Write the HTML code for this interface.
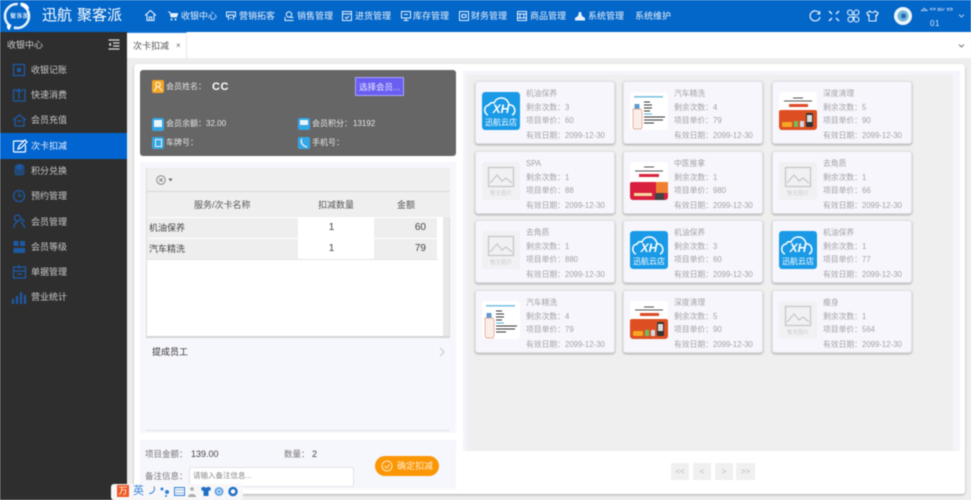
<!DOCTYPE html>
<html lang="zh">
<head>
<meta charset="utf-8">
<title>次卡扣减</title>
<style>
html,body{margin:0;padding:0;width:971px;height:500px;overflow:hidden;background:#eee}
#r{position:relative;width:971px;height:500px;overflow:hidden;font-family:"Liberation Sans","Noto Sans CJK SC",sans-serif;filter:blur(.5px);background:#eee}
#r div,#r span.a,#r svg.a{position:absolute}
.t{white-space:nowrap;line-height:12px}
.n{color:#e8f1fb;font-size:9px;top:10px}
.s{color:#c9c9c9;font-size:9px;left:31px}
.c{width:138px;height:61px;background:#f6f6fc;border:1px solid #e2e2e8;border-radius:3px;box-shadow:0 1px 2px #a5a5a5}
.c .t{left:50px;color:#a2a2a6;font-size:7.800px}
.im{left:6px;top:10px;width:38px;height:38px;overflow:hidden;border-radius:3px}
.m{color:#e6e6e6;font-size:8px}
.cell{font-size:9px;color:#444;line-height:20px;height:20px;white-space:nowrap}
.p{top:463px;width:18px;height:17px;background:#f0f0f0;color:#bbb;font-size:8px;line-height:17px;text-align:center}
</style>
</head>
<body>
<div id="r">
<svg width="0" height="0" style="position:absolute">
<symbol id="xh" viewBox="0 0 38 38"><rect width="38" height="38" rx="3" fill="#1a9ae6"/><path d="M6 23c-4-1-5-9 1-10 1-2 3-3 5-2 2-6 11-7 14-1 1 1 1 2 1 3 6-1 8 8 3 10" fill="none" stroke="#fff" stroke-width="1.500"/></symbol>
<symbol id="ph" viewBox="0 0 38 38"><rect width="38" height="38" fill="#f1f1f4"/><rect x="6.500" y="5.500" width="25" height="19" fill="none" stroke="#c6c6c6" stroke-width="1.300"/><path d="M8 21l7-8 5 6 4-3 6 5" fill="none" stroke="#c6c6c6" stroke-width="1.200"/></symbol>
<symbol id="bt" viewBox="0 0 38 38"><rect width="38" height="38" fill="#fff"/><rect x="4" y="4" width="29" height="1.600" fill="#7cc4e2"/><rect x="4.500" y="12" width="5" height="5" fill="#5b9bd0"/><path d="M3 17h8l1 3v15l-1 2H4l-1-2z" fill="#fbeee8" stroke="#dd9c88" stroke-width=".7"/><path d="M14 10h6M14 13h8M14 16h8M14 19h6M14 22h8M14 25h21M14 28h19M14 31h10" stroke="#333" stroke-width="1.100"/><path d="M14 22h8" stroke="#4ab0d8" stroke-width="1.100"/></symbol>
<symbol id="or" viewBox="0 0 38 38"><rect width="38" height="38" rx="2" fill="#fff"/><path d="M14 6h10M5 9h28" stroke="#555" stroke-width="1"/><rect x="10" y="12" width="19" height="3" fill="#dc4a2a"/><rect y="18" width="38" height="20" rx="2" fill="#dd4f22"/><rect x="3" y="30" width="10" height="5" rx="1" fill="#f5a623"/><rect x="15" y="29" width="4" height="6" fill="#6cbf5a"/><rect x="21" y="29" width="4" height="6" fill="#cde"/><rect x="27" y="21" width="7" height="14" rx="1" fill="#333"/><rect x="28" y="23" width="5" height="7" fill="#ddd"/></symbol>
<symbol id="rd" viewBox="0 0 38 38"><rect width="38" height="38" rx="2" fill="#fff"/><path d="M14 5h10M5 9h28" stroke="#555" stroke-width="1"/><rect x="9" y="12" width="20" height="3" fill="#d8243c"/><rect y="20" width="38" height="18" rx="2" fill="#d81f3e"/><rect x="26" y="20" width="12" height="11" fill="#f08030"/><rect x="4" y="31" width="18" height="3" fill="#f6d9a0"/><rect x="25" y="31" width="9" height="7" fill="#444"/></symbol>
</svg>

<!-- Top bar -->
<div style="left:0;top:0;width:971px;height:32px;background:#0366c9"></div>
<svg class="a" style="left:3px;top:1px" width="29" height="30" viewBox="0 0 29 30"><circle cx="14" cy="15" r="12" fill="none" stroke="#e8f2fb" stroke-width="2.600" stroke-dasharray="22 3 32 3"/><path d="M17 2c4-1 9 2 9 6-4 0-7-2-9-6zM5 23c-2 2-1 5 1 6 2-1 2-4-1-6z" fill="#fff"/></svg>
<div class="t" style="left:10px;top:10px;font-size:6px;color:#fff;letter-spacing:.4px;font-family:'Noto Serif CJK SC',serif;font-weight:700">聚客派</div>
<div class="t" style="left:42px;top:7px;font-size:15px;line-height:18px;color:#fff">迅航</div>
<div class="t" style="left:77px;top:7px;font-size:15px;line-height:18px;color:#fff">聚客派</div>

<svg class="a" style="left:144px;top:9px" width="13" height="13" viewBox="0 0 13 13" fill="none" stroke="#e8f1fb" stroke-width="1.100"><path d="M1 6.500L6.500 1.500 12 6.500M3 5.500V11.500H10V5.500M5.300 11.500V8H7.700V11.500"/></svg>
<svg class="a" style="left:168px;top:11px" width="10" height="10" viewBox="0 0 10 10"><path d="M0 1h2l1 5h5.500L10 2.500H2.500" fill="#e8f1fb" stroke="#e8f1fb" stroke-width=".8"/><circle cx="3.500" cy="8.500" r="1" fill="#e8f1fb"/><circle cx="7.500" cy="8.500" r="1" fill="#e8f1fb"/></svg>
<div class="t n" style="left:181px">收银中心</div>
<svg class="a" style="left:226px;top:11px" width="10" height="10" viewBox="0 0 10 10" fill="none" stroke="#e8f1fb"><path d="M.5 1h9v4.500h-2V4h-5v1.500h-2zM2.500 4v5M7.500 4v5M4 7h2"/></svg>
<div class="t n" style="left:239px">营销拓客</div>
<svg class="a" style="left:284px;top:11px" width="10" height="10" viewBox="0 0 10 10" fill="none" stroke="#e8f1fb"><circle cx="5" cy="3.500" r="2.700"/><path d="M1 6v3.500h8.500M6.500 6.500h3"/></svg>
<div class="t n" style="left:297px">销售管理</div>
<svg class="a" style="left:342px;top:11px" width="10" height="10" viewBox="0 0 10 10" fill="none" stroke="#e8f1fb"><rect x=".5" y=".5" width="9" height="9"/><path d="M.5 3h9M3 6l1.500 1.500L7 5"/></svg>
<div class="t n" style="left:355px">进货管理</div>
<svg class="a" style="left:401px;top:11px" width="10" height="10" viewBox="0 0 10 10" fill="none" stroke="#e8f1fb"><rect x=".5" y=".5" width="9" height="6.500"/><path d="M5 7v2.500M2.500 9.500h5M3 3.500h4"/></svg>
<div class="t n" style="left:413px">库存管理</div>
<svg class="a" style="left:459px;top:11px" width="10" height="10" viewBox="0 0 10 10" fill="none" stroke="#e8f1fb"><rect x=".5" y=".5" width="9" height="9"/><rect x="3" y="3.500" width="4" height="3"/></svg>
<div class="t n" style="left:471px">财务管理</div>
<svg class="a" style="left:517px;top:11px" width="10" height="10" viewBox="0 0 10 10" fill="none" stroke="#e8f1fb"><rect x=".5" y=".5" width="9" height="9"/><path d="M.5 3h9M.5 7h9M3 3v4M7 3v4"/></svg>
<div class="t n" style="left:530px">商品管理</div>
<svg class="a" style="left:575px;top:11px" width="10" height="10" viewBox="0 0 10 10" fill="#e8f1fb"><path d="M4 1h2l1 4 3 2v2.500H0V7l3-2z"/></svg>
<div class="t n" style="left:588px">系统管理</div>
<div class="t n" style="left:635px">系统维护</div>

<svg class="a" style="left:809px;top:10px" width="12" height="12" viewBox="0 0 12 12" fill="none" stroke="#e8f1fb" stroke-width="1.200"><path d="M10.500 3.500A5 5 0 1 0 11 7"/><path d="M10.800 1v3H8" stroke-width="1"/></svg>
<svg class="a" style="left:828px;top:10px" width="12" height="12" viewBox="0 0 12 12" fill="none" stroke="#e8f1fb" stroke-width="1.400"><path d="M1 1l3 3M11 1L8 4M1 11l3-3M11 11L8 8"/></svg>
<svg class="a" style="left:846px;top:9px" width="14" height="14" viewBox="0 0 14 14" fill="none" stroke="#e8f1fb" stroke-width="1.100"><path d="M7 6H4a2.500 2.500 0 1 1 2.500-2.500V6zM8 6V3.500a2.500 2.500 0 1 1 2.500 2.500zM7 8v2.500A2.500 2.500 0 1 1 4 8zM8 8h2.500A2.500 2.500 0 1 1 8 10.500z"/></svg>
<svg class="a" style="left:866px;top:10px" width="13" height="12" viewBox="0 0 13 12" fill="none" stroke="#e8f1fb" stroke-width="1.100"><path d="M4 1L.8 3l1.200 2.500L3 5v6h7V5l1 .5L12.200 3 9 1c-.5 2-4.500 2-5 0z"/></svg>
<svg class="a" style="left:894px;top:7px" width="18" height="18" viewBox="0 0 18 18"><circle cx="9" cy="9" r="9" fill="#eef5fa"/><circle cx="9" cy="9" r="5.500" fill="#6fb4e0"/><circle cx="9.500" cy="9" r="2.500" fill="#2a6aa8"/></svg>
<div style="left:920px;top:7px;width:33px;height:4px;overflow:hidden"><div class="t" style="left:0;top:-1px;font-size:8.500px;color:#dfe9f5">会员账号</div></div>
<div class="t" style="left:930px;top:18px;font-size:8px;color:#dfe9f5;letter-spacing:.5px">01</div>
<svg class="a" style="left:958px;top:14px" width="7" height="4" viewBox="0 0 7 4" fill="none" stroke="#a9cdf0"><path d="M1 .5l2.500 2.500L6 .5"/></svg>

<!-- Sidebar -->
<div style="left:0;top:32px;width:127px;height:468px;background:#2e2e2e"></div>
<div class="t" style="left:7px;top:39px;font-size:9px;color:#cfcfcf">收银中心</div>
<svg class="a" style="left:108px;top:39px" width="12" height="11" viewBox="0 0 12 11" stroke="#ddd" fill="#ddd"><path d="M.5 1h11M5 4h6.500M5 7h6.500M.5 10h11" stroke-width="1.300"/><path d="M3 3.500v4L.5 5.500z" stroke="none"/></svg>
<div style="left:0;top:133px;width:127px;height:26px;background:#0065d0"></div>
<div class="t s" style="top:64px">收银记账</div>
<div class="t s" style="top:89px">快速消费</div>
<div class="t s" style="top:114px">会员充值</div>
<div class="t s" style="top:140px;color:#eef">次卡扣减</div>
<div class="t s" style="top:165px">积分兑换</div>
<div class="t s" style="top:190px">预约管理</div>
<div class="t s" style="top:216px">会员管理</div>
<div class="t s" style="top:241px">会员等级</div>
<div class="t s" style="top:266px">单据管理</div>
<div class="t s" style="top:291px">营业统计</div>
<svg class="a" style="left:0;top:58px" width="30" height="250" viewBox="0 0 30 250" fill="none" stroke="#1d5aa6" stroke-width="1.300">
<rect x="13.500" y="6.500" width="11" height="11"/><rect x="17" y="10" width="4" height="4" fill="#1d5aa6" stroke="none"/>
<path d="M17 32h-3.500v11H25V32h-3M19 41v-9M16.500 34l2.500-3 2.500 3"/>
<path d="M13 62l6.500-5 6.500 5M15 60v8h9v-8M17 63h5"/>
<path d="M24 83h-9.500a1 1 0 0 0-1 1v9a1 1 0 0 0 1 1h10a1 1 0 0 0 1-1v-6M18 91l1-3 6-6 2 2-6 6z" stroke="#fff" stroke-width="1.200"/>
<rect x="15" y="107" width="9" height="10" rx="2" fill="#1d5aa6" opacity=".6"/><circle cx="19.500" cy="109" r="3" fill="#1d5aa6" stroke="none"/>
<circle cx="19" cy="138" r="5.500"/><path d="M19 134.500V138h3"/>
<circle cx="17.500" cy="160" r="3"/><path d="M14 170c0-4 2-6 4-6M21 163l4 7M21 161a3 3 0 0 1 3 3"/>
<rect x="13.500" y="183" width="5" height="5" fill="#1d5aa6" stroke="none"/><rect x="20" y="183" width="5" height="5" fill="#1d5aa6" stroke="none"/><rect x="13.500" y="190" width="11.500" height="5" fill="#1d5aa6" stroke="none"/>
<rect x="13.500" y="209" width="12" height="11"/><path d="M13.500 213h12M19 207v4M17 216h5"/>
<path d="M13 246v-5M17 246v-8M21 246v-12M25 246v-9" stroke-width="2.200"/>
</svg>

<!-- Tab bar -->
<div style="left:127px;top:32px;width:844px;height:26px;background:#fff"></div>
<div style="left:127px;top:32px;width:60px;height:26px;background:#fff;border-top:1px solid #2d86d8;box-sizing:border-box;border-right:1px solid #e8e8e8"></div>
<div class="t" style="left:133px;top:40px;font-size:9px;color:#555">次卡扣减</div>
<div class="t" style="left:176px;top:40px;font-size:8px;color:#666">×</div>
<svg class="a" style="left:958px;top:44px" width="7" height="4" viewBox="0 0 7 4" fill="none" stroke="#777"><path d="M1 .5l2.500 2.500L6 .5"/></svg>

<!-- Card -->
<div style="left:134px;top:64px;width:831px;height:430px;background:#fff;border-radius:3px;box-shadow:0 1px 2px #aaa"></div>

<!-- Member panel -->
<div style="left:140px;top:70px;width:316px;height:86px;background:#666;border-radius:3px"></div>
<div style="left:152px;top:80px;width:12px;height:13px;background:#f5a623;border-radius:2px"></div>
<svg class="a" style="left:153px;top:81px" width="10" height="11" viewBox="0 0 10 11" fill="none" stroke="#fff"><circle cx="5" cy="3.500" r="2.300"/><path d="M1 10l3-4M9 10L6 6"/></svg>
<div class="t m" style="left:166px;top:81px">会员姓名：</div>
<div class="t" style="left:212px;top:81px;font-size:11px;font-weight:700;color:#fff;letter-spacing:.5px">CC</div>
<div class="t" style="left:355px;top:77px;width:49px;height:19px;line-height:18px;box-sizing:border-box;background:#6a5ef2;border:1px solid #a9a3fa;color:#e6e6ff;font-size:8.500px;text-align:center">选择会员...</div>
<div style="left:152px;top:118px;width:12px;height:13px;background:#35a6e4;border-radius:2px"></div>
<div style="left:154px;top:120px;width:8px;height:7px;background:#e9f5fc"></div>
<div class="t m" style="left:166px;top:118px">会员余额：<span style="font-size:8px">32.00</span></div>
<div style="left:298px;top:118px;width:12px;height:12px;background:#35a6e4;border-radius:2px"></div>
<div style="left:300px;top:120px;width:8px;height:5px;background:#e9f5fc"></div>
<div class="t m" style="left:312px;top:118px">会员积分：</div>
<div class="t m" style="left:353px;top:118px">13192</div>
<div style="left:152px;top:137px;width:12px;height:12px;background:#35a6e4;border-radius:2px"></div>
<div style="left:155px;top:139px;width:7px;height:8px;border:1px solid #e9f5fc;box-sizing:border-box"></div>
<div class="t m" style="left:166px;top:137px">车牌号：</div>
<div style="left:298px;top:137px;width:12px;height:12px;background:#35a6e4;border-radius:2px"></div>
<svg class="a" style="left:300px;top:138px" width="9" height="10" viewBox="0 0 9 10" fill="none" stroke="#fff" stroke-width="1.200"><path d="M2 1C0 3 2 8 7 9"/></svg>
<div class="t m" style="left:312px;top:137px">手机号：</div>

<!-- Left lower lavender -->
<div style="left:140px;top:162px;width:316px;height:271px;background:#f6f6fd"></div>
<div style="left:146px;top:430px;width:304px;height:1px;background:#dfdfe4"></div>

<!-- Table -->
<div style="left:146px;top:168px;width:304px;height:170px;background:#fff;border:1px solid #ddd;border-top:0;box-sizing:border-box;border-bottom:2px solid #d5d5d5"></div>
<div style="left:147px;top:168px;width:303px;height:24px;background:#efefef;border-bottom:1px solid #d9d9d9;box-sizing:border-box"></div>
<div style="left:147px;top:192px;width:303px;height:25px;background:#efefef"></div>
<div style="left:443px;top:217px;width:6px;height:119px;background:#e8e8e8"></div>
<svg class="a" style="left:156px;top:175px" width="20" height="10" viewBox="0 0 20 10" fill="none" stroke="#777" stroke-width=".8"><circle cx="5" cy="5" r="4.300"/><path d="M3.300 3.300l3.400 3.400M6.700 3.300L3.300 6.700"/><path d="M12.500 3.500h4l-2 3z" fill="#666" stroke="none"/></svg>
<div class="t" style="left:194px;top:199px;font-size:9px;color:#555">服务/次卡名称</div>
<div class="t" style="left:318px;top:199px;font-size:9px;color:#555">扣减数量</div>
<div class="t" style="left:397px;top:199px;font-size:9px;color:#555">金额</div>
<div class="cell" style="left:147px;top:218px;width:151px;background:#eee;padding-left:2px;box-sizing:border-box">机油保养</div>
<div class="cell" style="left:298px;top:218px;width:76px;background:#fff;text-align:center;font-size:10px;padding-right:9px;box-sizing:border-box">1</div>
<div class="cell" style="left:374px;top:218px;width:63px;background:#eee;text-align:right;padding-right:11px;box-sizing:border-box;font-size:10px">60</div>
<div class="cell" style="left:147px;top:239px;width:151px;background:#eee;padding-left:2px;box-sizing:border-box">汽车精洗</div>
<div class="cell" style="left:298px;top:239px;width:76px;background:#fff;text-align:center;font-size:10px;padding-right:9px;box-sizing:border-box">1</div>
<div class="cell" style="left:374px;top:239px;width:63px;background:#eee;text-align:right;padding-right:11px;box-sizing:border-box;font-size:10px">79</div>
<div style="left:147px;top:259px;width:291px;height:1px;background:#e4e4e4"></div>

<div class="t" style="left:152px;top:346px;font-size:9px;color:#333">提成员工</div>
<svg class="a" style="left:439px;top:347px" width="6" height="10" viewBox="0 0 6 10" fill="none" stroke="#ccc" stroke-width="1.200"><path d="M1 1l4 4-4 4"/></svg>

<!-- Bottom left -->
<div style="left:140px;top:440px;width:316px;height:49px;background:#f6f6fd"></div>
<div class="t" style="left:145px;top:448px;font-size:8.500px;color:#777">项目金额：</div>
<div class="t" style="left:191px;top:448px;font-size:9px;color:#444">139.00</div>
<div class="t" style="left:284px;top:448px;font-size:8.500px;color:#777">数量：</div>
<div class="t" style="left:312px;top:448px;font-size:9px;color:#444">2</div>
<div class="t" style="left:145px;top:470px;font-size:8.500px;color:#777">备注信息：</div>
<div style="left:189px;top:467px;width:165px;height:20px;background:#fff;border:1px solid #e4e4e4;box-sizing:border-box;border-radius:2px"></div>
<div class="t" style="left:193px;top:470px;font-size:7.500px;color:#888">请输入备注信息...</div>
<div style="left:375px;top:456px;width:64px;height:20px;background:#fb9606;border-radius:10px"></div>
<svg class="a" style="left:381px;top:460px" width="12" height="12" viewBox="0 0 12 12" fill="none" stroke="#ffe6b8"><circle cx="6" cy="6" r="5"/><path d="M3.500 6l2 2 3-3.500"/></svg>
<div class="t" style="left:397px;top:460px;font-size:9px;color:#ffeccc">确定扣减</div>

<!-- Right panel -->
<div style="left:463px;top:71px;width:497px;height:380px;background:#f4f4fb"></div>
<div style="left:467px;top:75px;width:486px;height:376px;background:#efefef"></div>

<!-- Row 1 -->
<div class="c" style="left:475px;top:81px"><svg class="a im" viewBox="0 0 38 38"><use href="#xh"/><text x="19" y="21" text-anchor="middle" font-size="12" font-weight="700" font-style="italic" fill="#fff" font-family="Liberation Sans">XH</text><text x="19" y="33" text-anchor="middle" font-size="8" fill="#fff" font-family="Noto Sans CJK SC">迅航云店</text></svg><div class="t" style="top:6px">机油保养</div><div class="t" style="top:20px">剩余次数：3</div><div class="t" style="top:33px">项目单价：60</div><div class="t" style="top:48px">有效日期：2099-12-30</div></div>
<div class="c" style="left:623px;top:81px"><svg class="a im" viewBox="0 0 38 38"><use href="#bt"/></svg><div class="t" style="top:6px">汽车精洗</div><div class="t" style="top:20px">剩余次数：4</div><div class="t" style="top:33px">项目单价：79</div><div class="t" style="top:48px">有效日期：2099-12-30</div></div>
<div class="c" style="left:772px;top:81px"><svg class="a im" viewBox="0 0 38 38"><use href="#or"/></svg><div class="t" style="top:6px">深度清理</div><div class="t" style="top:20px">剩余次数：5</div><div class="t" style="top:33px">项目单价：90</div><div class="t" style="top:48px">有效日期：2099-12-30</div></div>

<!-- Row 2 -->
<div class="c" style="left:475px;top:151px"><svg class="a im" viewBox="0 0 38 38"><use href="#ph"/><text x="19" y="33" text-anchor="middle" font-size="5.500" fill="#ccc" font-family="Noto Sans CJK SC">暂无图片</text></svg><div class="t" style="top:6px">SPA</div><div class="t" style="top:20px">剩余次数：1</div><div class="t" style="top:33px">项目单价：88</div><div class="t" style="top:48px">有效日期：2099-12-30</div></div>
<div class="c" style="left:623px;top:151px"><svg class="a im" viewBox="0 0 38 38"><use href="#rd"/></svg><div class="t" style="top:6px">中医推拿</div><div class="t" style="top:20px">剩余次数：1</div><div class="t" style="top:33px">项目单价：980</div><div class="t" style="top:48px">有效日期：2099-12-30</div></div>
<div class="c" style="left:772px;top:151px"><svg class="a im" viewBox="0 0 38 38"><use href="#ph"/><text x="19" y="33" text-anchor="middle" font-size="5.500" fill="#ccc" font-family="Noto Sans CJK SC">暂无图片</text></svg><div class="t" style="top:6px">去角质</div><div class="t" style="top:20px">剩余次数：1</div><div class="t" style="top:33px">项目单价：66</div><div class="t" style="top:48px">有效日期：2099-12-30</div></div>

<!-- Row 3 -->
<div class="c" style="left:475px;top:220px"><svg class="a im" viewBox="0 0 38 38"><use href="#ph"/><text x="19" y="33" text-anchor="middle" font-size="5.500" fill="#ccc" font-family="Noto Sans CJK SC">暂无图片</text></svg><div class="t" style="top:6px">去角质</div><div class="t" style="top:20px">剩余次数：1</div><div class="t" style="top:33px">项目单价：880</div><div class="t" style="top:48px">有效日期：2099-12-30</div></div>
<div class="c" style="left:623px;top:220px"><svg class="a im" viewBox="0 0 38 38"><use href="#xh"/><text x="19" y="21" text-anchor="middle" font-size="12" font-weight="700" font-style="italic" fill="#fff" font-family="Liberation Sans">XH</text><text x="19" y="33" text-anchor="middle" font-size="8" fill="#fff" font-family="Noto Sans CJK SC">迅航云店</text></svg><div class="t" style="top:6px">机油保养</div><div class="t" style="top:20px">剩余次数：3</div><div class="t" style="top:33px">项目单价：60</div><div class="t" style="top:48px">有效日期：2099-12-30</div></div>
<div class="c" style="left:772px;top:220px"><svg class="a im" viewBox="0 0 38 38"><use href="#xh"/><text x="19" y="21" text-anchor="middle" font-size="12" font-weight="700" font-style="italic" fill="#fff" font-family="Liberation Sans">XH</text><text x="19" y="33" text-anchor="middle" font-size="8" fill="#fff" font-family="Noto Sans CJK SC">迅航云店</text></svg><div class="t" style="top:6px">机油保养</div><div class="t" style="top:20px">剩余次数：1</div><div class="t" style="top:33px">项目单价：77</div><div class="t" style="top:48px">有效日期：2099-12-30</div></div>

<!-- Row 4 -->
<div class="c" style="left:475px;top:290px"><svg class="a im" viewBox="0 0 38 38"><use href="#bt"/></svg><div class="t" style="top:6px">汽车精洗</div><div class="t" style="top:20px">剩余次数：4</div><div class="t" style="top:33px">项目单价：79</div><div class="t" style="top:48px">有效日期：2099-12-30</div></div>
<div class="c" style="left:623px;top:290px"><svg class="a im" viewBox="0 0 38 38"><use href="#or"/></svg><div class="t" style="top:6px">深度清理</div><div class="t" style="top:20px">剩余次数：5</div><div class="t" style="top:33px">项目单价：90</div><div class="t" style="top:48px">有效日期：2099-12-30</div></div>
<div class="c" style="left:772px;top:290px"><svg class="a im" viewBox="0 0 38 38"><use href="#ph"/><text x="19" y="33" text-anchor="middle" font-size="5.500" fill="#ccc" font-family="Noto Sans CJK SC">暂无图片</text></svg><div class="t" style="top:6px">瘦身</div><div class="t" style="top:20px">剩余次数：1</div><div class="t" style="top:33px">项目单价：564</div><div class="t" style="top:48px">有效日期：2099-12-30</div></div>

<!-- Pagination -->
<div class="p" style="left:671px">&lt;&lt;</div>
<div class="p" style="left:693px">&lt;</div>
<div class="p" style="left:715px">&gt;</div>
<div class="p" style="left:736px;width:19px">&gt;&gt;</div>

<!-- IME toolbar -->
<div style="left:111px;top:484px;width:132px;height:16px;background:#f7f7fa;border-radius:3px"></div>
<div class="t" style="left:117px;top:485px;width:12px;height:12px;background:#ee5a24;color:#fff;font-size:9px;text-align:center;line-height:12px">万</div>
<div class="t" style="left:133px;top:485px;font-size:11px;color:#3a85dc">英</div>
<svg class="a" style="left:148px;top:485px" width="90" height="13" viewBox="0 0 90 13">
<path d="M6 1.500A5 5 0 0 1 1 8.500 5 5 0 0 0 6 1.500z" fill="#2f7fd6" stroke="#2f7fd6"/>
<circle cx="14" cy="4" r="1.500" fill="#2f7fd6"/><circle cx="19" cy="7" r="2" fill="#2f7fd6"/><circle cx="18" cy="11" r="1" fill="#2f7fd6"/>
<rect x="26.500" y="2.500" width="10" height="8" fill="none" stroke="#2f7fd6"/><path d="M28 5h7M28 8h7" stroke="#2f7fd6" stroke-dasharray="1 1"/>
<circle cx="44" cy="4" r="1.800" fill="#aaa"/><path d="M40 12c0-4 8-4 8 0z" fill="#aaa"/>
<path d="M53 3l3-1.500c1 1.500 3 1.500 4 0l3 1.500-1 3-1.500-.5V11h-5V5.500L54 6z" fill="#1f6fc4"/>
<circle cx="71" cy="6.500" r="4.500" fill="#6aa5e2"/><circle cx="71" cy="6.500" r="2" fill="none" stroke="#fff" stroke-width=".8"/>
<circle cx="85" cy="6.500" r="3.500" fill="none" stroke="#1f6fc4" stroke-width="2.400"/>
</svg>
</div>
</body>
</html>
